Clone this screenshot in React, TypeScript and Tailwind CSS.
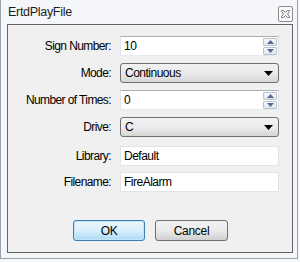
import React from "react";

const font = "font-['Liberation_Sans',Arial,sans-serif]";

function Label({ children }: { children: React.ReactNode }) {
  return (
    <div className="w-[103px] text-right text-[12px] tracking-[-0.6px] text-black">
      {children}
    </div>
  );
}

function Spinner() {
  return (
    <div className="flex flex-col gap-[1px] mr-[1px]">
      {["up", "down"].map((d) => (
        <div
          key={d}
          className="w-[14px] h-[8px] border border-[#b9c3cf] rounded-[1px] bg-gradient-to-b from-[#f6f8fb] to-[#dfe5ec] flex items-center justify-center"
        >
          <svg width="7" height="4" viewBox="0 0 7 4">
            {d === "up" ? (
              <path d="M0 4 L3.5 0 L7 4 Z" fill="#4e6a92" />
            ) : (
              <path d="M0 0 L3.5 4 L7 0 Z" fill="#4e6a92" />
            )}
          </svg>
        </div>
      ))}
    </div>
  );
}

function NumberBox({ value }: { value: string }) {
  return (
    <div className="w-[159px] h-[20px] bg-white border border-[#abadb3] border-r-[#dbdfe6] border-b-[#e3e9ef] border-l-[#e2e3ea] flex items-center justify-between">
      <span className="pl-[3px] text-[12px] tracking-[-0.5px]">{value}</span>
      <Spinner />
    </div>
  );
}

function Combo({ value }: { value: string }) {
  return (
    <div className="w-[159px] h-[20px] rounded-[3px] border border-[#707070] bg-gradient-to-b from-[#f2f2f2] via-[#ebebeb] to-[#d6d6d6] flex items-center justify-between">
      <span className="pl-[4px] text-[12px] tracking-[-0.5px]">{value}</span>
      <svg width="9" height="5" viewBox="0 0 9 5" className="mr-[5px]">
        <path d="M0 0 L9 0 L4.5 5 Z" fill="#000" />
      </svg>
    </div>
  );
}

function TextBox({ value }: { value: string }) {
  return (
    <div className="w-[159px] h-[20px] bg-white border border-[#e3e3e3] flex items-center">
      <span className="pl-[3px] text-[12px] tracking-[-0.5px]">{value}</span>
    </div>
  );
}

function Row({ label, children, className = "" }: { label: string; children: React.ReactNode; className?: string }) {
  return (
    <div className={`flex items-center gap-[9px] ${className}`}>
      <Label>{label}</Label>
      {children}
    </div>
  );
}

export default function App() {
  return (
    <div className={`w-[300px] h-[262px] bg-[#f4f6f9] ${font} text-black`}>
      <div className="w-[298px] h-[259px] border-l border-r border-b border-[#9aa3ad]">
        {/* Title bar */}
        <div className="h-[24px] flex items-center justify-between pl-[7px] pr-[4px]">
          <span className="text-[12.5px] tracking-[-0.3px] text-[#1b1b1b]">ErtdPlayFile</span>
          <div className="w-[15px] h-[16px] mt-[4px] border border-[#8b8b8b] rounded-[2px] bg-[#fafafa] flex items-center justify-center">
            <svg width="9" height="8" viewBox="0 0 9 8">
              <path
                d="M0.5 0.5 H2.5 L4.5 2.5 L6.5 0.5 H8.5 V1.5 L6.5 4 L8.5 6.5 V7.5 H6.5 L4.5 5.5 L2.5 7.5 H0.5 V6.5 L2.5 4 L0.5 1.5 Z"
                fill="none"
                stroke="#707070"
                strokeWidth="1"
              />
            </svg>
          </div>
        </div>

        {/* Client panel */}
        <div className="ml-[6px] w-[286px] h-[229px] border border-[#646464] bg-[#f0f0f0] pt-[11px] flex flex-col">
          <Row label="Sign Number:">
            <NumberBox value="10" />
          </Row>
          <Row label="Mode:" className="mt-[7px]">
            <Combo value="Continuous" />
          </Row>
          <Row label="Number of Times:" className="mt-[7px]">
            <NumberBox value="0" />
          </Row>
          <Row label="Drive:" className="mt-[7px]">
            <Combo value="C" />
          </Row>
          <Row label="Library:" className="mt-[9px]">
            <TextBox value="Default" />
          </Row>
          <Row label="Filename:" className="mt-[6px]">
            <TextBox value="FireAlarm" />
          </Row>

          <div className="flex gap-[10px] pl-[65px] mt-[28px]">
            <button className="w-[72px] h-[21px] rounded-[3px] border border-[#3c7fb1] bg-gradient-to-b from-[#eaf6fd] via-[#d9f0fc] to-[#a7d9f5] shadow-[inset_0_0_0_1px_#c2e4f6] text-[12px] tracking-[-0.3px]">
              OK
            </button>
            <button className="w-[73px] h-[21px] rounded-[3px] border border-[#707070] bg-gradient-to-b from-[#f2f2f2] via-[#ebebeb] to-[#cfcfcf] text-[12px] tracking-[-0.3px]">
              Cancel
            </button>
          </div>
        </div>
      </div>
    </div>
  );
}
